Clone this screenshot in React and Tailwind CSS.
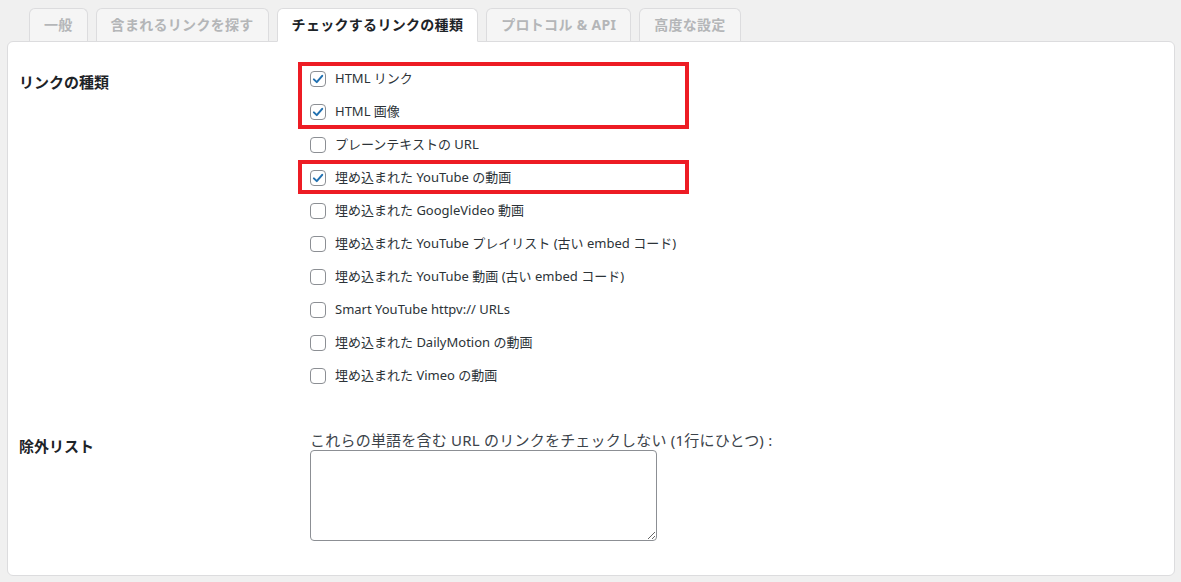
import React from "react";

const FONT = { fontFamily: '"Noto Sans", "Noto Sans CJK JP", sans-serif' };

const tabs = [
  { label: "一般" },
  { label: "含まれるリンクを探す" },
  { label: "チェックするリンクの種類", active: true },
  { label: "プロトコル & API" },
  { label: "高度な設定" },
];

const items = [
  { label: "HTML リンク", checked: true },
  { label: "HTML 画像", checked: true },
  { label: "プレーンテキストの URL", checked: false },
  { label: "埋め込まれた YouTube の動画", checked: true },
  { label: "埋め込まれた GoogleVideo 動画", checked: false },
  { label: "埋め込まれた YouTube プレイリスト (古い embed コード)", checked: false },
  { label: "埋め込まれた YouTube 動画 (古い embed コード)", checked: false },
  { label: "Smart YouTube httpv:// URLs", checked: false },
  { label: "埋め込まれた DailyMotion の動画", checked: false },
  { label: "埋め込まれた Vimeo の動画", checked: false },
];

function Checkbox({ checked }) {
  return (
    <span className="w-4 h-4 shrink-0 rounded-[4px] border border-[#8c8f94] bg-white flex items-center justify-center">
      {checked && (
        <svg width="14" height="14" viewBox="0 0 16 16">
          <path d="M3.3 8.4 L6.6 11.6 L12.8 4.4" fill="none" stroke="#2271b1" strokeWidth="2.3" strokeLinecap="round" strokeLinejoin="round" />
        </svg>
      )}
    </span>
  );
}

export default function App() {
  return (
    <div className="w-[1181px] h-[582px] bg-[#f0f0f0] pt-2 pl-[7px] pr-[6px] overflow-hidden" style={FONT}>
      <div className="flex gap-2 pl-[22px] h-[33px] relative z-10">
        {tabs.map((t) => (
          <div
            key={t.label}
            className={
              t.active
                ? "h-[34px] px-[14px] flex items-center border border-[#dcdcde] border-b-white rounded-t-md bg-white text-[14px] tracking-[0.3px] font-bold text-[#1d2327] leading-none"
                : "h-[33px] px-[14px] flex items-center border border-[#dcdcde] border-b-0 rounded-t-md bg-[#f5f5f5] text-[14px] tracking-[0.3px] font-bold text-[#b4b6b8] leading-none"
            }
          >
            {t.label}
          </div>
        ))}
      </div>
      <div className="h-[535px] bg-white border border-[#dcdcde] rounded-md pl-[11px]">
        <div className="flex">
          <div className="w-[291px] shrink-0 pt-[30px] text-[15px] leading-5 font-bold text-[#1d2327]">リンクの種類</div>
          <div className="relative pt-[20px]">
            {items.map((it) => (
              <div key={it.label} className="h-[33px] flex items-center">
                <Checkbox checked={it.checked} />
                <span className="ml-[9px] text-[13px] text-[#2c3338] whitespace-nowrap">{it.label}</span>
              </div>
            ))}
            <div className="absolute left-[-12px] top-[20px] w-[391px] h-[67px] border-[4px] border-[#ed1c24]" />
            <div className="absolute left-[-12px] top-[118px] w-[391px] h-[34px] border-[4px] border-[#ed1c24]" />
          </div>
        </div>
        <div className="flex mt-[38px]">
          <div className="w-[291px] shrink-0 pt-[6px] text-[15px] leading-5 font-bold text-[#1d2327]">除外リスト</div>
          <div className="flex flex-col">
            <div className="text-[15px] leading-5 tracking-[0.22px] text-[#3c434a] whitespace-nowrap">これらの単語を含む URL のリンクをチェックしない (1行にひとつ) :</div>
            <textarea className="mt-0 w-[347px] h-[91px] border border-[#8c8f94] rounded-[4px] bg-white outline-none" />
          </div>
        </div>
      </div>
    </div>
  );
}
